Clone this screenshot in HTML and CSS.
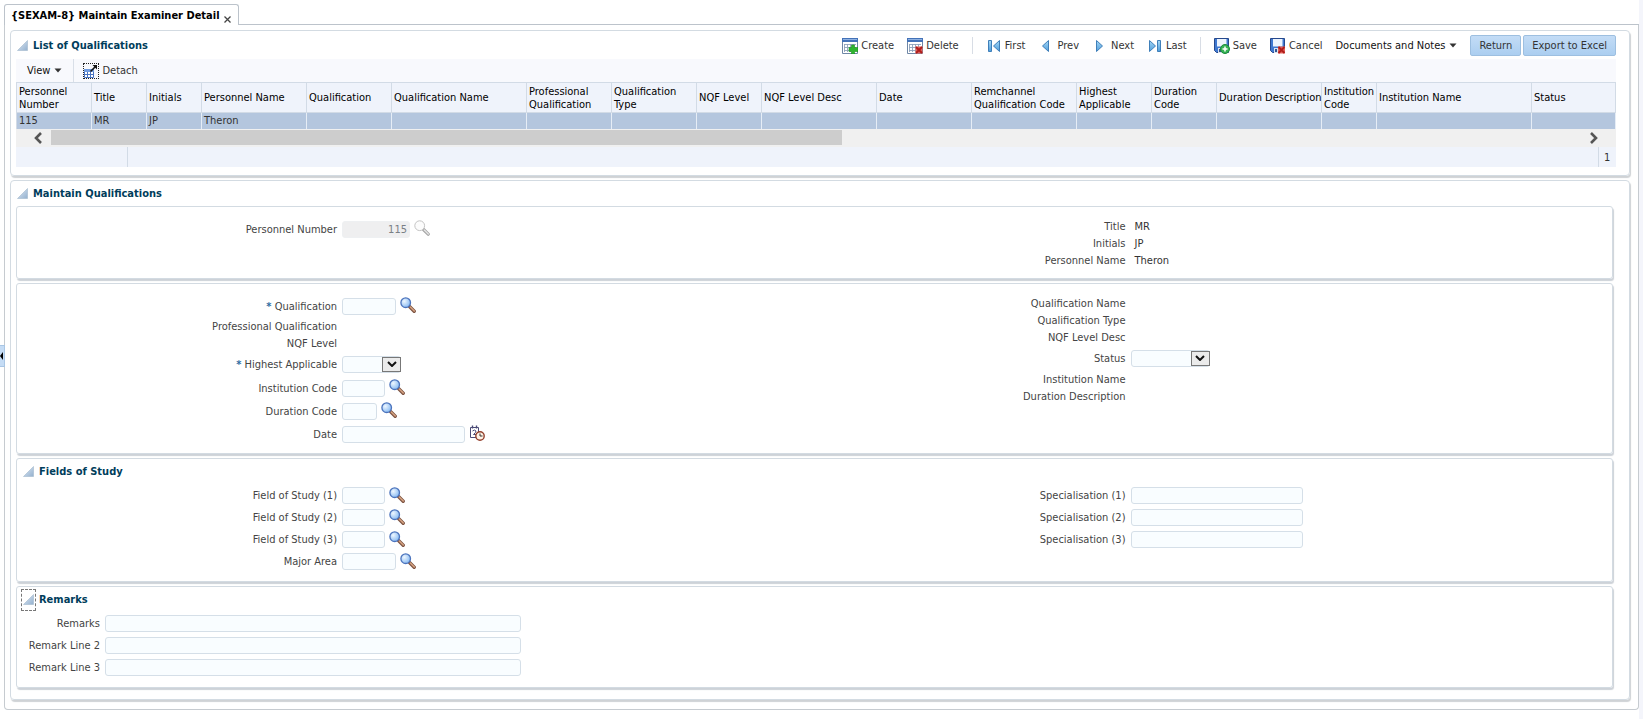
FILE: index.html
```
<!DOCTYPE html>
<html lang="en">
<head>
  <meta charset="UTF-8">
  <title>Maintain Examiner Detail</title>
  <link rel="stylesheet" href="styles.css">
</head>
<body>
  <!-- Shared icons -->
  <svg class="sprite" aria-hidden="true">
    <defs>
      <linearGradient id="triFill" x1="0" y1="0" x2="1" y2="1"><stop offset="0.3" stop-color="#c9d9ea"/><stop offset="1" stop-color="#93b0ce"/></linearGradient>
      <linearGradient id="navFill" x1="0" y1="0" x2="0" y2="1"><stop offset="0" stop-color="#a5d8f6"/><stop offset="1" stop-color="#4f9ddb"/></linearGradient>
      <radialGradient id="lens" cx="0.35" cy="0.35" r="0.7"><stop offset="0" stop-color="#eef7ff"/><stop offset="1" stop-color="#86b9f2"/></radialGradient>
    </defs>
    <symbol id="tri" viewBox="0 0 11 11"><path d="M10.5 .5v10H.5z" fill="url(#triFill)" stroke="#a3b8cc" stroke-width=".6"/></symbol>
    <symbol id="search" viewBox="0 0 16 16">
      <path d="M9.500 9.500l4.700 4.700" stroke="#7d5342" stroke-width="3.400" stroke-linecap="round"/>
      <path d="M10.300 10l4 4" stroke="#d6a482" stroke-width="1.500" stroke-linecap="round"/>
      <circle cx="5.700" cy="5.700" r="4.800" fill="url(#lens)" stroke="#4c74bd" stroke-width="1.300"/>
    </symbol>
    <symbol id="searchOff" viewBox="0 0 16 16">
      <path d="M9.500 9.500l4.700 4.700" stroke="#a3a3a3" stroke-width="3.200" stroke-linecap="round"/>
      <path d="M10.300 10l4 4" stroke="#e4e4e4" stroke-width="1.400" stroke-linecap="round"/>
      <circle cx="5.700" cy="5.700" r="4.900" fill="#fcfcfc" stroke="#c4c4c4" stroke-width="1"/>
    </symbol>
    <symbol id="sheet" viewBox="0 0 16 16">
      <path d="M.5 .5h15v15H.5z" fill="#fff" stroke="#6f87a6"/>
      <path d="M0 0h16v4H0z" fill="#4372b8"/><path d="M1 1h14v1H1z" fill="#8fb2e2"/>
      <path d="M2 6.500h12M2 9.500h12M2 12.500h12M2.500 6v8M5.500 6v8M8.500 6v8M11.500 6v8" stroke="#8fa2ba" stroke-width=".9"/>
    </symbol>
    <symbol id="disk" viewBox="0 0 16 16">
      <path d="M1 .5h13.500v14H2.500L.5 12.500V.5z" fill="#3f78d0" stroke="#26498d"/>
      <path d="M3 1h9.500v7.500H3z" fill="#edf4fd"/><path d="M4 10h7v5H4z" fill="#dbe4ef"/><path d="M5 11h2v3H5z" fill="#31548f"/>
    </symbol>
    <symbol id="caret" viewBox="0 0 8 5"><path d="M.5 .5h7L4 4.500z" fill="#333"/></symbol>
    <symbol id="chev" viewBox="0 0 10 6"><path d="M1 1l4 4 4-4" fill="none" stroke="#111" stroke-width="2"/></symbol>
  </svg>

  <button class="splitter" type="button" aria-label="Expand pane"><svg width="3" height="8" viewBox="0 0 3 8"><path d="M3 0v8L0 4z"/></svg></button>

  <div class="tabs">
    <div class="tab">{SEXAM-8} Maintain Examiner Detail
      <button class="tab-close" type="button" aria-label="Close"><svg width="7" height="7" viewBox="0 0 7 7"><path d="M.5 .5l6 6M6.500 .5l-6 6" stroke="#444" stroke-width="1.300"/></svg></button>
    </div>
    <div class="tab-line"></div>
  </div>

  <main class="page">
    <!-- List of qualifications -->
    <section class="panel list-panel">
      <div class="panel-head">
        <button class="disclose" type="button" aria-label="Collapse"><svg width="11" height="11"><use href="#tri"/></svg></button>
        <h2>List of Qualifications</h2>
        <div class="actions">
          <button class="tool" type="button"><svg width="16" height="16"><use href="#sheet"/><path d="M9.500 7h3v2.500H16v4h-3.500V16h-3v-2.500H7v-4h2.500z" fill="#2fb52f" stroke="#1d8f24" stroke-width=".6"/></svg>Create</button>
          <button class="tool" type="button"><svg width="16" height="16"><use href="#sheet"/><path d="M8.500 8.500h7v7h-7z" fill="#e0605a"/><path d="M9 9l6 6M15 9l-6 6" stroke="#b01d1a" stroke-width="1.800"/></svg>Delete</button>
          <span class="sep"></span>
          <button class="tool" type="button"><svg width="16" height="16"><path d="M2.500 2.500h3v11h-3zM13.500 2.500v11L7.500 8z" fill="url(#navFill)" stroke="#3f7fb9"/></svg>First</button>
          <button class="tool" type="button"><svg width="16" height="16"><path d="M10.500 2.500v11L4.500 8z" fill="url(#navFill)" stroke="#3f7fb9"/></svg>Prev</button>
          <button class="tool" type="button"><svg width="16" height="16"><path d="M4.500 2.500v11L10.500 8z" fill="url(#navFill)" stroke="#3f7fb9"/></svg>Next</button>
          <button class="tool" type="button"><svg width="16" height="16"><path d="M2.500 2.500v11L8.500 8zM10.500 2.500h3v11h-3z" fill="url(#navFill)" stroke="#3f7fb9"/></svg>Last</button>
          <span class="sep"></span>
          <button class="tool" type="button"><svg width="16" height="16"><use href="#disk"/><circle cx="11" cy="11" r="4.500" fill="#35b254" stroke="#1b8a3b"/><path d="M11 8.500v5M8.500 11h5" stroke="#fff" stroke-width="1.500"/></svg>Save</button>
          <button class="tool" type="button"><svg width="16" height="16"><use href="#disk"/><path d="M8 8.500h7v7H8z" fill="#e0605a"/><path d="M8.500 9l6 6M14.500 9l-6 6" stroke="#b01d1a" stroke-width="1.800"/></svg>Cancel</button>
          <button class="menu" type="button">Documents and Notes<svg width="8" height="5"><use href="#caret"/></svg></button>
          <div class="btns">
            <button class="btn" type="button">Return</button>
            <button class="btn" type="button">Export to Excel</button>
          </div>
        </div>
      </div>

      <div class="table-bar">
        <button class="menu view" type="button">View<svg width="8" height="5"><use href="#caret"/></svg></button>
        <button class="tool detach" type="button"><svg width="16" height="16"><path d="M1.500 6.500h9v8h-9z" fill="#fff" stroke="#4a74c2"/><path d="M1 6h10v3H1z" fill="#6f9be0"/><path d="M4.500 9v6M7.500 9v6M1 11.500h10" stroke="#4a74c2"/><path d="M7.500 8.500l5-5" stroke="#111" stroke-width="1.600"/><path d="M9.500 2h4.500v4.500z" fill="#111"/></svg>Detach</button>
      </div>

      <table class="grid">
        <colgroup>
          <col class="w75"><col class="w55"><col class="w55"><col class="w105"><col class="w85"><col class="w135"><col class="w85"><col class="w85"><col class="w65"><col class="w115"><col class="w95"><col class="w105"><col class="w75"><col class="w65"><col class="w105"><col class="w55"><col class="w155"><col>
        </colgroup>
        <thead>
          <tr>
            <th>Personnel<br>Number</th><th>Title</th><th>Initials</th><th>Personnel Name</th><th>Qualification</th><th>Qualification Name</th><th>Professional<br>Qualification</th><th>Qualification<br>Type</th><th>NQF Level</th><th>NQF Level Desc</th><th>Date</th><th>Remchannel<br>Qualification Code</th><th>Highest<br>Applicable</th><th>Duration<br>Code</th><th>Duration Description</th><th>Institution<br>Code</th><th>Institution Name</th><th>Status</th>
          </tr>
        </thead>
        <tbody>
          <tr>
            <td>115</td><td>MR</td><td>JP</td><td>Theron</td><td></td><td></td><td></td><td></td><td></td><td></td><td></td><td></td><td></td><td></td><td></td><td></td><td></td><td></td>
          </tr>
        </tbody>
      </table>
      <div class="scroll">
        <button class="scroll-btn" type="button" aria-label="Scroll left"><svg width="10" height="12" viewBox="0 0 10 12"><path d="M8 1L3 6l5 5" fill="none" stroke="#555" stroke-width="2.600"/></svg></button>
        <div class="track"><div class="thumb"></div></div>
        <button class="scroll-btn" type="button" aria-label="Scroll right"><svg width="10" height="12" viewBox="0 0 10 12"><path d="M2 1l5 5-5 5" fill="none" stroke="#555" stroke-width="2.600"/></svg></button>
      </div>
      <div class="grid-foot"><span class="foot-left"></span><span class="foot-count">1</span></div>
    </section>

    <!-- Maintain qualifications -->
    <section class="panel edit-panel">
      <div class="panel-head">
        <button class="disclose" type="button" aria-label="Collapse"><svg width="11" height="11"><use href="#tri"/></svg></button>
        <h2>Maintain Qualifications</h2>
      </div>

      <div class="box cols person">
        <div class="col">
          <div class="row"><label for="persNo">Personnel Number</label><input class="w-68" id="persNo" type="text" value="115" disabled><button class="lov" type="button" aria-label="Search" disabled><svg width="16" height="16"><use href="#searchOff"/></svg></button></div>
        </div>
        <div class="col">
          <div class="text-row"><span class="label">Title</span><span class="value">MR</span></div>
          <div class="text-row"><span class="label">Initials</span><span class="value">JP</span></div>
          <div class="text-row"><span class="label">Personnel Name</span><span class="value">Theron</span></div>
        </div>
      </div>

      <div class="box cols">
        <div class="col">
          <div class="row"><label for="qual"><b>*</b> Qualification</label><input class="w-54" id="qual" type="text"><button class="lov" type="button" aria-label="Search"><svg width="16" height="16"><use href="#search"/></svg></button></div>
          <div class="text-row"><span class="label">Professional Qualification</span></div>
          <div class="text-row"><span class="label">NQF Level</span></div>
          <div class="row select-row"><label for="highest"><b>*</b> Highest Applicable</label><span class="pick w-59"><select id="highest"><option></option></select><span class="pick-btn"><svg width="10" height="6"><use href="#chev"/></svg></span></span></div>
          <div class="row"><label for="inst">Institution Code</label><input class="w-43" id="inst" type="text"><button class="lov" type="button" aria-label="Search"><svg width="16" height="16"><use href="#search"/></svg></button></div>
          <div class="row"><label for="dur">Duration Code</label><input class="w-35" id="dur" type="text"><button class="lov" type="button" aria-label="Search"><svg width="16" height="16"><use href="#search"/></svg></button></div>
          <div class="row"><label for="date">Date</label><input class="w-123" id="date" type="text"><button class="lov" type="button" aria-label="Pick date"><svg width="16" height="16" viewBox="0 0 16 16"><path d="M1.500 2.500h8v10h-8z" fill="#fff" stroke="#4c4c77"/><path d="M3.500 .5v3M7.500 .5v3" stroke="#4c4c77" stroke-width="1.400"/><path d="M3.500 6q2-2 3.500 0q0 1.500-2.500 3.500h2.500" fill="none" stroke="#4c4c77"/><circle cx="11" cy="11" r="4.200" fill="#fff3e6" stroke="#93402c" stroke-width="1.400"/><path d="M11 8.500V11h2.500" fill="none" stroke="#333"/></svg></button></div>
        </div>
        <div class="col">
          <div class="text-row"><span class="label">Qualification Name</span></div>
          <div class="text-row"><span class="label">Qualification Type</span></div>
          <div class="text-row"><span class="label">NQF Level Desc</span></div>
          <div class="row select-row"><label for="status">Status</label><span class="pick w-79"><select id="status"><option></option></select><span class="pick-btn"><svg width="10" height="6"><use href="#chev"/></svg></span></span></div>
          <div class="text-row"><span class="label">Institution Name</span></div>
          <div class="text-row"><span class="label">Duration Description</span></div>
        </div>
      </div>

      <div class="box titled">
        <div class="box-head">
          <button class="disclose" type="button" aria-label="Collapse"><svg width="11" height="11"><use href="#tri"/></svg></button>
          <h3>Fields of Study</h3>
        </div>
        <div class="cols tight">
          <div class="col">
            <div class="row"><label for="fos1">Field of Study (1)</label><input class="w-43" id="fos1" type="text"><button class="lov" type="button" aria-label="Search"><svg width="16" height="16"><use href="#search"/></svg></button></div>
            <div class="row"><label for="fos2">Field of Study (2)</label><input class="w-43" id="fos2" type="text"><button class="lov" type="button" aria-label="Search"><svg width="16" height="16"><use href="#search"/></svg></button></div>
            <div class="row"><label for="fos3">Field of Study (3)</label><input class="w-43" id="fos3" type="text"><button class="lov" type="button" aria-label="Search"><svg width="16" height="16"><use href="#search"/></svg></button></div>
            <div class="row"><label for="major">Major Area</label><input class="w-54" id="major" type="text"><button class="lov" type="button" aria-label="Search"><svg width="16" height="16"><use href="#search"/></svg></button></div>
          </div>
          <div class="col">
            <div class="row"><label for="spec1">Specialisation (1)</label><input class="w-172" id="spec1" type="text"></div>
            <div class="row"><label for="spec2">Specialisation (2)</label><input class="w-172" id="spec2" type="text"></div>
            <div class="row"><label for="spec3">Specialisation (3)</label><input class="w-172" id="spec3" type="text"></div>
          </div>
        </div>
      </div>

      <div class="box titled">
        <div class="box-head">
          <button class="disclose focused" type="button" aria-label="Collapse"><svg width="11" height="11"><use href="#tri"/></svg></button>
          <h3>Remarks</h3>
        </div>
        <div class="remarks tight">
          <div class="row"><label for="rem1">Remarks</label><input class="w-416" id="rem1" type="text"></div>
          <div class="row"><label for="rem2">Remark Line 2</label><input class="w-416" id="rem2" type="text"></div>
          <div class="row"><label for="rem3">Remark Line 3</label><input class="w-416" id="rem3" type="text"></div>
        </div>
      </div>
    </section>
  </main>
</body>
</html>
```

FILE: styles.css
```
* {
  box-sizing: border-box;
}
body {
  margin: 0;
  padding: 4px 0 0 4px;
  position: relative;
  background: #fff;
  font-family: "DejaVu Sans Condensed", "Noto Sans", sans-serif;
  font-size: 11px;
  line-height: 13px;
  color: #333;
  border-right: 4px solid #f4f5fb;
  min-height: 100vh;
}
button, input, select {
  font: inherit;
  color: inherit;
}
button {
  border: 0;
  padding: 0;
  background: none;
}
svg {
  display: block;
  flex: none;
}
.sprite {
  position: absolute;
  width: 0;
  height: 0;
}
h2, h3 {
  margin: 0;
  font-size: 11px;
  line-height: 13px;
  color: #003d5b;
}
.splitter {
  position: absolute;
  left: 0;
  top: 345px;
  width: 5px;
  height: 22px;
  display: flex;
  align-items: center;
  background: #c5dcf5;
  border: 1px solid #a9c6e4;
  border-left: 0;
}

/* Tabs */
.tabs {
  display: flex;
  height: 21px;
}
.tab {
  display: flex;
  gap: 4px;
  padding: 4px 7px 0 6px;
  border: 1px solid #bcc3cb;
  border-bottom: 0;
  border-radius: 3px 3px 0 0;
  font-weight: bold;
  color: #000;
}
.tab-close {
  padding-top: 4px;
}
.tab-line {
  flex: 1;
  border-bottom: 1px solid #bcc3cb;
}
.page {
  padding: 5px 8px 9px 5px;
  border: 1px solid #c6cbd0;
  border-top: 0;
  border-radius: 0 0 4px 4px;
}

/* Panels */
.panel {
  padding: 0 13px 8px 5px;
  border: 1px solid #d3dbe2;
  border-radius: 4px;
  box-shadow: 1px 2px 1px #cfd2d5;
}
.panel + .panel {
  margin-top: 4px;
}
.panel-head {
  display: flex;
  align-items: center;
  height: 28px;
  padding-top: 1px;
}
.disclose {
  width: 13px;
  height: 20px;
  padding-left: 1px;
  margin-right: 4px;
  display: flex;
  align-items: center;
}
.focused {
  outline: 1px dashed #777;
}
.edit-panel .panel-head {
  height: 25px;
}
.edit-panel {
  padding: 0 16px 11px 5px;
}

/* Actions */
.actions {
  display: flex;
  align-items: center;
  gap: 13px;
  margin-left: auto;
}
.tool {
  display: flex;
  align-items: center;
  gap: 3px;
}
.sep {
  width: 1px;
  height: 17px;
  background: #d8dde5;
}
.menu {
  display: flex;
  align-items: center;
  gap: 4px;
  color: #111;
}
.btns {
  display: flex;
  gap: 2px;
}
.btn {
  height: 21px;
  padding: 0 8px;
  border: 1px solid #9dbfe0;
  border-radius: 2px;
  background: linear-gradient(#c3dcf6, #abcef0);
}

/* Table */
.table-bar {
  display: flex;
  height: 23px;
  background: #f8f9fd;
}
.view {
  padding: 0 11px;
  border-right: 1px solid #d9dfe8;
}
.detach {
  margin-left: 9px;
}
.detach svg {
  outline: 1px dotted #222;
  outline-offset: -1px;
}
.grid {
  width: 100%;
  table-layout: fixed;
  border-collapse: collapse;
  color: #000;
}
.grid th {
  height: 30px;
  padding: 0 0 0 2px;
  text-align: left;
  font-weight: normal;
  white-space: nowrap;
  background: #eff3fb;
  border: 1px solid #d2dbe6;
  border-left: 0;
}
.grid td {
  height: 16px;
  padding: 0 0 0 2px;
  background: #b4c6de;
  border-right: 1px solid #e6edf6;
  color: #333;
}
.grid th:first-child,
.grid td:first-child {
  border-left: 1px solid #d2dbe6;
}
.w55 { width: 55px; }
.w65 { width: 65px; }
.w75 { width: 75px; }
.w85 { width: 85px; }
.w95 { width: 95px; }
.w105 { width: 105px; }
.w115 { width: 115px; }
.w135 { width: 135px; }
.w155 { width: 155px; }
.scroll {
  display: flex;
  align-items: center;
  height: 18px;
  padding: 0 12px 0 17px;
  background: #f0f0f0;
}
.scroll-btn {
  width: 18px;
  display: flex;
}
.scroll-btn:last-child {
  width: 20px;
  padding-left: 5px;
}
.track {
  flex: 1;
}
.thumb {
  width: 51.6%;
  height: 15px;
  background: #cdcdcd;
}
.grid-foot {
  display: flex;
  justify-content: space-between;
  height: 20px;
  background: #eff3fb;
}
.foot-left {
  width: 112px;
  border-right: 1px solid #d2dbe6;
}
.foot-count {
  width: 18px;
  padding: 4px 0 0 5px;
  border-left: 1px solid #d2dbe6;
}

/* Form boxes */
.box {
  padding: 11px 18px 7px 0;
  border: 1px solid #d3dbe2;
  border-radius: 3px;
  box-shadow: 1px 2px 1px #cdd2d8;
}
.box + .box {
  margin-top: 4px;
}
.person {
  min-height: 73px;
}
.cols {
  display: grid;
  grid-template-columns: 1fr 1fr;
}
.titled {
  padding-top: 0;
  padding-bottom: 8px;
}
.box-head {
  display: flex;
  align-items: center;
  height: 26px;
  padding-left: 5px;
}
.row, .text-row {
  display: flex;
  align-items: center;
  height: 23px;
}
.text-row {
  height: 17px;
}
.select-row {
  height: 25px;
}
.tight .row {
  height: 22px;
}
.row label, .label {
  width: 320px;
  margin-right: 5px;
  text-align: right;
  color: #444;
}
.remarks .row label {
  width: 83px;
}
.row b {
  color: #2f6ca3;
}
.value {
  padding-left: 4px;
}
.row input {
  height: 17px;
  padding: 0 2px;
  border: 1px solid #d5dfe8;
  border-radius: 3px;
  background: #f9fdff;
}
.row input:disabled {
  border-color: #eef0f2;
  background: #efeff0;
  color: #7a7f86;
  text-align: right;
}
.lov {
  margin-left: 4px;
  padding-bottom: 2px;
}
.pick {
  position: relative;
  height: 17px;
}
.pick select {
  width: 100%;
  height: 17px;
  appearance: none;
  border: 1px solid #d5dfe8;
  border-radius: 3px;
  background: #f9fdff;
}
.pick-btn {
  position: absolute;
  top: 1px;
  right: 0;
  width: 19px;
  height: 15px;
  display: flex;
  align-items: center;
  justify-content: center;
  border: 1px solid #777;
  background: #ebebeb;
  pointer-events: none;
}
.remarks .row label {
  width: 83px;
}
.w-35 { width: 35px; }
.w-43 { width: 43px; }
.w-54 { width: 54px; }
.w-59 { width: 59px; }
.w-68 { width: 68px; }
.w-79 { width: 79px; }
.w-123 { width: 123px; }
.w-172 { width: 172px; }
.w-416 { width: 416px; }
```
